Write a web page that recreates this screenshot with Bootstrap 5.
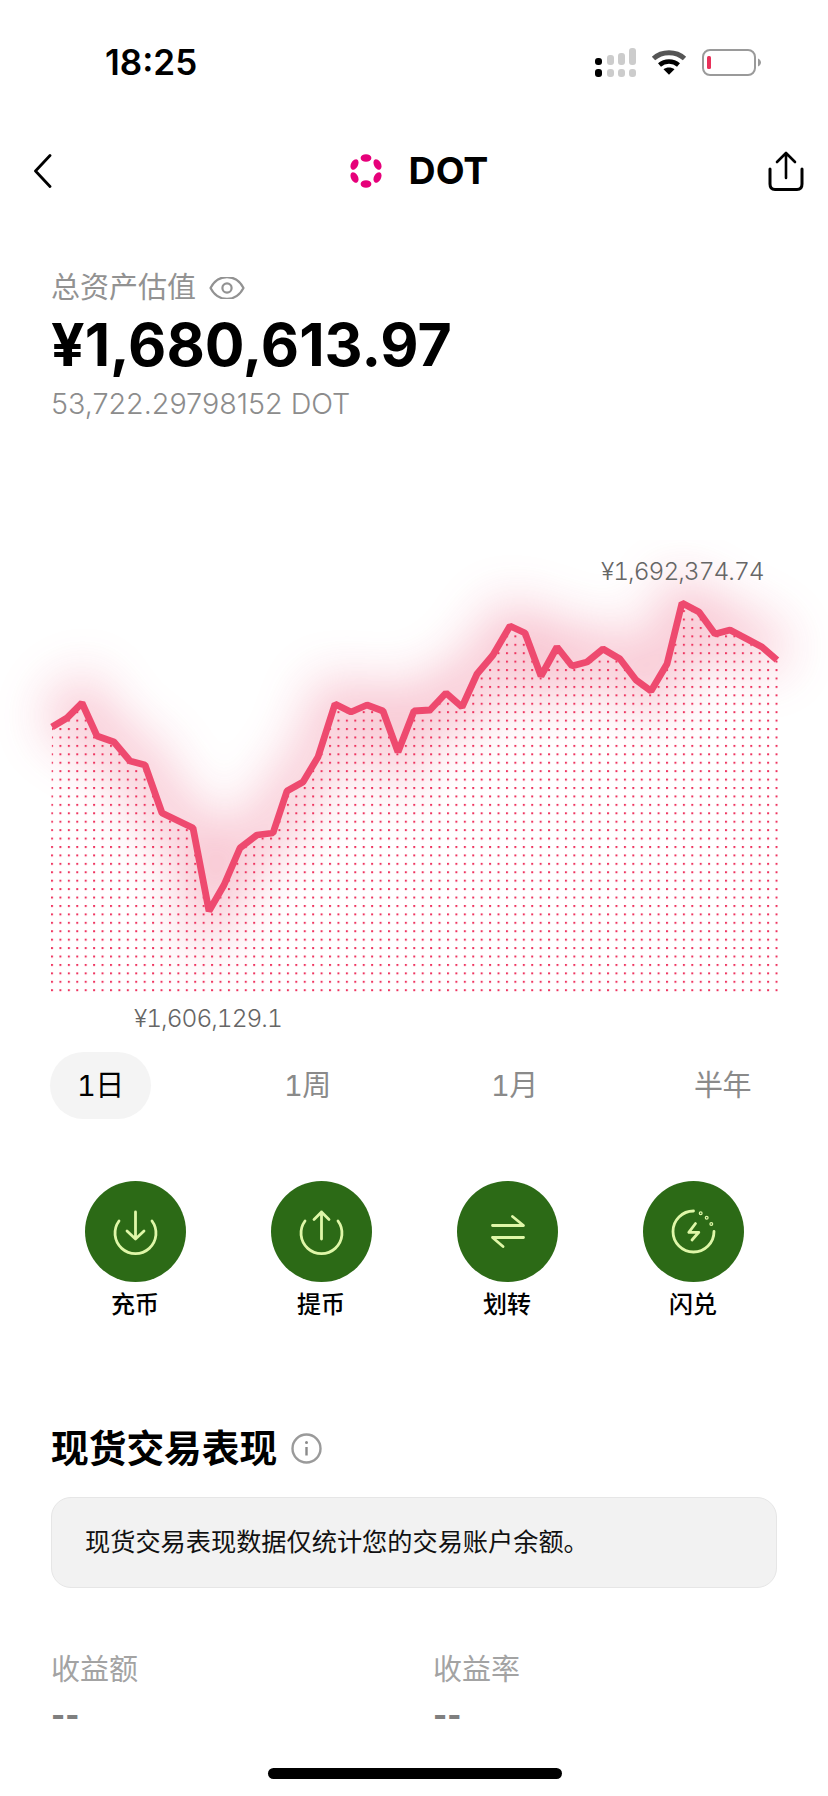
<!DOCTYPE html>
<html lang="zh-CN">
  <head>
    <meta charset="UTF-8" />
    <meta name="viewport" content="width=device-width, initial-scale=1.0" />
    <title>DOT</title>
    <link href="https://cdn.jsdelivr.net/npm/bootstrap@5.3.0/dist/css/bootstrap.min.css" rel="stylesheet" />
    <style>
      html,
      body {
        margin: 0;
        background: #fff;
        font-family: "Inter", "Noto Sans CJK SC", sans-serif;
        color: #000;
      }

      .phone {
        width: 828px;
        height: 1796px;
        position: relative;
        overflow: hidden;
      }

      /* status bar */
      .status-row {
        height: 124px;
        padding: 0 67px 0 105px;
      }
      .clock-text {
        font-size: 35px;
        font-weight: 600;
        line-height: 1;
      }
      .status-icons {
        gap: 15px;
      }

      /* top nav */
      .top-nav {
        height: 94px;
        padding: 0 24px 0 34px;
      }
      .nav-side {
        width: 70px;
      }
      .coin-name {
        font-size: 37.5px;
        font-weight: 700;
        line-height: 1;
        margin-left: 27px;
      }

      /* totals */
      .asset-block {
        padding: 48px 51px 0;
      }
      .asset-label {
        font-size: 29px;
        line-height: 44px;
        color: #929292;
        gap: 13px;
      }
      .asset-total {
        font-size: 59px;
        font-weight: 700;
        line-height: 70px;
      }
      .asset-sub {
        font-size: 28.7px;
        font-weight: 300;
        line-height: 48px;
        color: #8c8c8c;
      }

      /* chart */
      .chart-wrap {
        position: relative;
        height: 500px;
        margin-top: 112px;
      }
      .chart-wrap svg {
        display: block;
      }
      .chart-tag {
        position: absolute;
        font-size: 24.5px;
        font-weight: 300;
        font-variant-numeric: tabular-nums;
        letter-spacing: -1px;
        line-height: 30px;
        color: #666;
        white-space: nowrap;
      }
      .tag-high {
        left: 601px;
        top: 16px;
      }
      .tag-low {
        left: 134px;
        top: 463px;
      }

      /* range tabs */
      .range-tabs {
        margin-top: 12px;
        padding: 0 50px;
      }
      .range-tab {
        height: 67px;
        padding: 0 27px;
        font-size: 29px;
        font-variant-numeric: tabular-nums;
        letter-spacing: -0.5px;
        line-height: 67px;
        color: #8a8a8a;
        border-radius: 34px;
      }
      .range-tab:last-child {
        padding-left: 23px;
      }
      .range-tab.is-on {
        background: #f4f4f4;
        color: #000;
      }

      /* actions */
      .action-row {
        margin-top: 62px;
        padding: 0 42px;
      }
      .action-disc {
        width: 101px;
        height: 101px;
        background: #2c6a16;
        border-radius: 50%;
      }
      .action-disc svg {
        display: block;
        fill: none;
        stroke: #dff7a8;
        stroke-width: 2.8;
        stroke-linecap: round;
        stroke-linejoin: round;
      }
      .action-name {
        font-size: 24px;
        font-weight: 500;
        line-height: 46px;
      }

      /* spot section */
      .spot-block {
        padding: 0 51px;
        margin-top: 97px;
      }
      .spot-title {
        font-size: 37.7px;
        font-weight: 700;
        line-height: 46px;
        gap: 14px;
        margin: 0;
      }
      .spot-note {
        margin-top: 26px;
        height: 91px;
        padding: 0 33px;
        background: #f2f2f2;
        border: 1px solid #e6e6e6;
        border-radius: 20px;
        font-size: 25.2px;
        color: #111;
      }
      .spot-stats {
        margin-top: 62px;
      }
      .stat-col {
        flex: 0 0 382px;
      }
      .stat-name {
        font-size: 29px;
        line-height: 40px;
        color: #a3a3a3;
      }
      .stat-value {
        font-size: 30px;
        font-weight: 800;
        line-height: 40px;
        margin-top: 5px;
        color: #7f7f7f;
      }

      .home-bar {
        position: absolute;
        left: 268px;
        top: 1768px;
        width: 294px;
        height: 11px;
        background: #000;
        border-radius: 6px;
      }
    </style>
  </head>

  <body>
    <div class="phone">
      <!-- Status bar -->
      <div class="status-row d-flex align-items-center justify-content-between">
        <span class="clock-text">18:25</span>
        <div class="status-icons d-flex align-items-center">
          <svg width="41" height="29" viewBox="0 0 41 29">
            <rect x="0" y="10" width="7" height="7" rx="3" fill="#000" />
            <rect x="0" y="21" width="7" height="8" rx="3" fill="#000" />
            <rect x="12" y="7" width="7" height="10" rx="3" fill="#ccc" />
            <rect x="12" y="21" width="7" height="8" rx="3" fill="#ccc" />
            <rect x="23" y="5" width="7" height="12" rx="3" fill="#ccc" />
            <rect x="23" y="21" width="7" height="8" rx="3" fill="#ccc" />
            <rect x="34" y="0" width="7" height="17" rx="3" fill="#ccc" />
            <rect x="34" y="21" width="7" height="8" rx="3" fill="#ccc" />
          </svg>
          <svg width="36" height="26" viewBox="0 0 36 26" fill="none">
            <path d="M2.5 9.5C11 1.8 25 1.8 33.5 9.5" stroke="#555" stroke-width="5" />
            <path d="M8.5 16C13.8 11.4 22.2 11.4 27.5 16" stroke="#000" stroke-width="4.5" />
            <path d="M12.5 20.2C15.5 17.8 20.5 17.8 23.5 20.2L18 25.8Z" fill="#000" />
          </svg>
          <svg width="59" height="27" viewBox="0 0 59 27" fill="none">
            <rect x="1" y="1" width="52" height="25" rx="7" stroke="#9a9a9a" stroke-width="2" />
            <rect x="5" y="7" width="4" height="13" rx="1.5" fill="#e8315a" />
            <path d="M56 9.5C58 10.5 59 12 59 13.5C59 15 58 16.5 56 17.5Z" fill="#9a9a9a" />
          </svg>
        </div>
      </div>

      <!-- Nav -->
      <div class="top-nav d-flex align-items-center">
        <div class="nav-side">
          <svg width="18" height="34" viewBox="0 0 18 34" fill="none" class="d-block">
            <path d="M16 1.5L1.5 17L16 32.5" stroke="#000" stroke-width="2.8" stroke-linecap="round" stroke-linejoin="round" />
          </svg>
        </div>
        <div class="flex-grow-1 d-flex align-items-center justify-content-center">
          <svg width="32" height="34" viewBox="0 0 32 34" class="d-block">
            <g fill="#e6007a">
              <ellipse cx="16" cy="4" rx="5.4" ry="3.8" />
              <ellipse cx="16" cy="30" rx="5.4" ry="3.8" />
              <ellipse cx="4.5" cy="10.5" rx="5.6" ry="3.5" transform="rotate(-62 4.5 10.5)" />
              <ellipse cx="27.5" cy="10.5" rx="5.6" ry="3.5" transform="rotate(62 27.5 10.5)" />
              <ellipse cx="4.5" cy="23.5" rx="5.6" ry="3.5" transform="rotate(62 4.5 23.5)" />
              <ellipse cx="27.5" cy="23.5" rx="5.6" ry="3.5" transform="rotate(-62 27.5 23.5)" />
            </g>
          </svg>
          <span class="coin-name">DOT</span>
        </div>
        <div class="nav-side d-flex justify-content-end">
          <svg width="36" height="40" viewBox="0 0 36 40" fill="none" class="d-block">
            <path d="M2 18V33C2 36.5 4 38.5 7 38.5H29C32 38.5 34 36.5 34 33V18" stroke="#000" stroke-width="3" stroke-linecap="round" />
            <path d="M18 27V2M9 11L18 2L27 11" stroke="#000" stroke-width="2.6" stroke-linecap="round" stroke-linejoin="round" />
          </svg>
        </div>
      </div>

      <!-- Totals -->
      <div class="asset-block">
        <div class="asset-label d-flex align-items-center">
          <span>总资产估值</span>
          <svg width="36" height="22" viewBox="0 0 36 22" fill="none">
            <path d="M1.5 11C9 -3.5 27 -3.5 34.5 11C27 25.5 9 25.5 1.5 11Z" stroke="#929292" stroke-width="2.2" stroke-linejoin="round" />
            <circle cx="18" cy="11" r="4.6" stroke="#929292" stroke-width="2.2" />
          </svg>
        </div>
        <div class="asset-total">¥1,680,613.97</div>
        <div class="asset-sub">53,722.29798152 DOT</div>
      </div>

      <!-- Chart -->
      <div class="chart-wrap">
        <svg width="828" height="500" viewBox="0 540 828 500">
          <defs>
            <filter id="lineGlow" filterUnits="userSpaceOnUse" x="-150" y="400" width="1130" height="760">
              <feGaussianBlur stdDeviation="27" />
            </filter>
            <pattern id="dotGrid" patternUnits="userSpaceOnUse" x="51" y="3.5" width="8.425" height="8.425">
              <rect x="0" y="0" width="2" height="2" fill="#ee3560" />
            </pattern>
            <clipPath id="underLine">
              <polygon points="52,727 67,718 82,703 97,736 114,742 130,761 145,765 162,813 193,828 209,911 224,885 240,848 257,835 273,833 287,791 303,782 318,757 335,704 351,712 367,705 383,711 398,752 414,711 430,710 446,693 462,707 477,674 493,655 510,626 525,633 541,676 557,647 572,666 587,662 603,649 620,659 636,680 651,691 667,664 682,603 699,612 715,634 730,630 747,639 762,647 778,660 778,992 50,992" />
            </clipPath>
          </defs>
          <polyline
            points="52,727 67,718 82,703 97,736 114,742 130,761 145,765 162,813 193,828 209,911 224,885 240,848 257,835 273,833 287,791 303,782 318,757 335,704 351,712 367,705 383,711 398,752 414,711 430,710 446,693 462,707 477,674 493,655 510,626 525,633 541,676 557,647 572,666 587,662 603,649 620,659 636,680 651,691 667,664 682,603 699,612 715,634 730,630 747,639 762,647 777,660"
            fill="none"
            stroke="#e9486f"
            stroke-width="38"
            opacity="0.36"
            filter="url(#lineGlow)"
          />
          <rect x="48" y="590" width="732" height="402" fill="url(#dotGrid)" clip-path="url(#underLine)" />
          <polyline
            points="52,727 67,718 82,703 97,736 114,742 130,761 145,765 162,813 193,828 209,911 224,885 240,848 257,835 273,833 287,791 303,782 318,757 335,704 351,712 367,705 383,711 398,752 414,711 430,710 446,693 462,707 477,674 493,655 510,626 525,633 541,676 557,647 572,666 587,662 603,649 620,659 636,680 651,691 667,664 682,603 699,612 715,634 730,630 747,639 762,647 777,660"
            fill="none"
            stroke="#ee4a6f"
            stroke-width="6.8"
            stroke-linejoin="bevel"
          />
        </svg>
        <span class="chart-tag tag-high">¥1,692,374.74</span>
        <span class="chart-tag tag-low">¥1,606,129.1</span>
      </div>

      <!-- Range tabs -->
      <div class="range-tabs d-flex justify-content-between">
        <div class="range-tab is-on">1日</div>
        <div class="range-tab">1周</div>
        <div class="range-tab">1月</div>
        <div class="range-tab">半年</div>
      </div>

      <!-- Actions -->
      <div class="action-row row g-0">
        <div class="col-3 d-flex flex-column align-items-center">
          <div class="action-disc">
            <svg width="101" height="101" viewBox="0 0 101 101">
              <path d="M34 40A20.5 20.5 0 1 0 67 40" />
              <path d="M50.5 31V58M42 50L50.5 58L59 50" />
            </svg>
          </div>
          <span class="action-name">充币</span>
        </div>
        <div class="col-3 d-flex flex-column align-items-center">
          <div class="action-disc">
            <svg width="101" height="101" viewBox="0 0 101 101">
              <path d="M34 40A20.5 20.5 0 1 0 67 40" />
              <path d="M50.5 31V58M43 38.5L50.5 31L58 38.5" />
            </svg>
          </div>
          <span class="action-name">提币</span>
        </div>
        <div class="col-3 d-flex flex-column align-items-center">
          <div class="action-disc">
            <svg width="101" height="101" viewBox="0 0 101 101">
              <path d="M35.5 44.5H66.5L55.5 35.5" />
              <path d="M66.5 56.5H35.5L46 65.5" />
            </svg>
          </div>
          <span class="action-name">划转</span>
        </div>
        <div class="col-3 d-flex flex-column align-items-center">
          <div class="action-disc">
            <svg width="101" height="101" viewBox="0 0 101 101">
              <path d="M50.5 30A20.5 20.5 0 1 0 71 50.5" />
              <path d="M52.5 42.5L45.8 51.3H55.8L49 59" />
              <circle cx="57.7" cy="32.3" r="0.6" />
              <circle cx="63.7" cy="36.7" r="0.6" />
              <circle cx="68.3" cy="43" r="0.6" />
            </svg>
          </div>
          <span class="action-name">闪兑</span>
        </div>
      </div>

      <!-- Spot performance -->
      <div class="spot-block">
        <h2 class="spot-title d-flex align-items-center">
          <span>现货交易表现</span>
          <svg width="31" height="31" viewBox="0 0 31 31" fill="none">
            <circle cx="15.5" cy="15.5" r="14" stroke="#9a9a9a" stroke-width="2.4" />
            <circle cx="15.5" cy="9.5" r="1.5" fill="#8a8a8a" />
            <path d="M15.5 14V22.5" stroke="#8a8a8a" stroke-width="2.4" />
          </svg>
        </h2>
        <div class="spot-note d-flex align-items-center">现货交易表现数据仅统计您的交易账户余额。</div>
        <div class="spot-stats d-flex">
          <div class="stat-col">
            <div class="stat-name">收益额</div>
            <div class="stat-value">--</div>
          </div>
          <div class="stat-col">
            <div class="stat-name">收益率</div>
            <div class="stat-value">--</div>
          </div>
        </div>
      </div>

      <div class="home-bar"></div>
    </div>

    <script src="https://cdn.jsdelivr.net/npm/bootstrap@5.3.0/dist/js/bootstrap.bundle.min.js"></script>
  </body>
</html>
